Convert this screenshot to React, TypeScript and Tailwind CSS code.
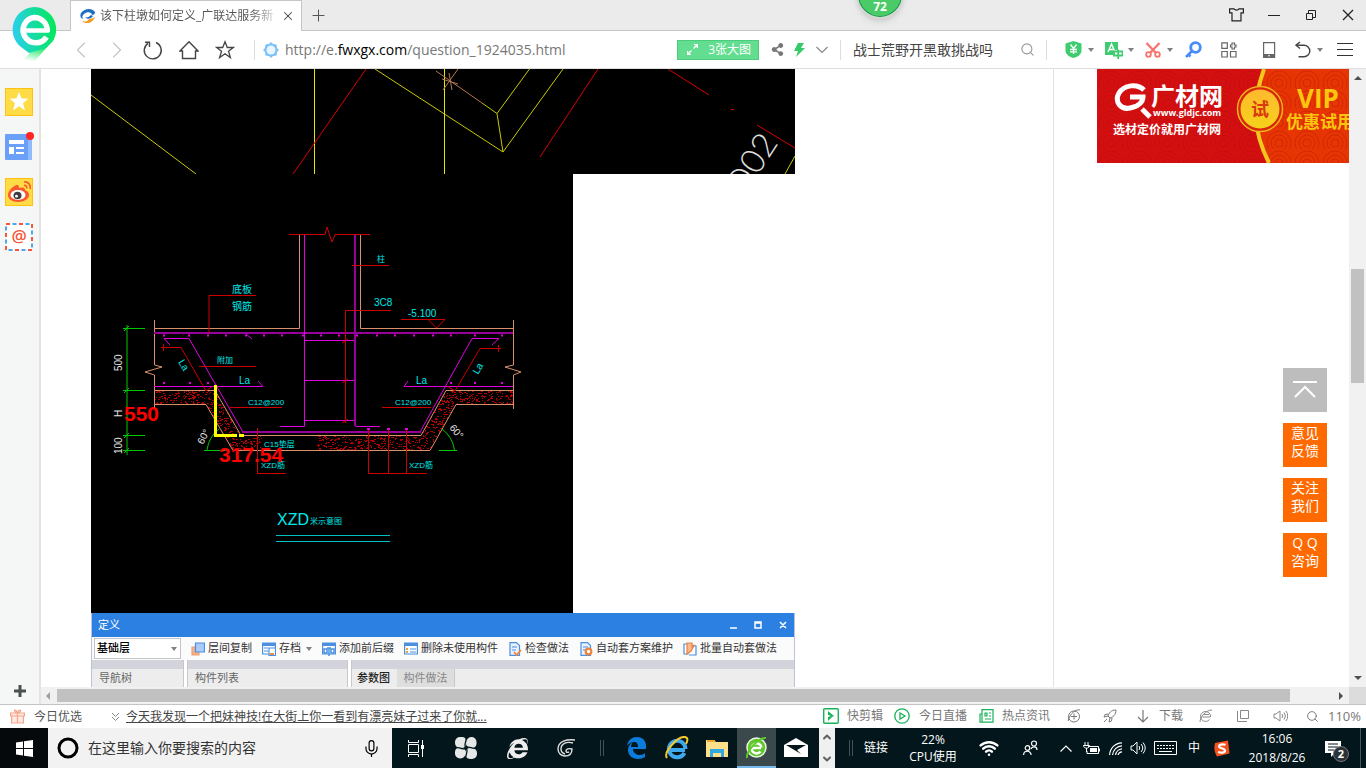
import type { ReactNode } from "react";
import { Mic, Search, ChevronDown, ChevronUp, ChevronLeft, ChevronRight, Plus, X, Star, Wifi } from "lucide-react";
import { FaShareAlt, FaInternetExplorer } from "react-icons/fa";

// ── Small shared pieces ────────────────────────────────────────────
function Caret() {
  return (
    <svg width="6" height="4" viewBox="0 0 6 4" className="shrink-0">
      <path d="M0 0h6L3 4z" fill="#808080" />
    </svg>
  );
}

function IconButton({ label, className, children }: { label: string; className: string; children: ReactNode }) {
  return (
    <button type="button" aria-label={label} className={`flex shrink-0 items-center ${className}`}>
      {children}
    </button>
  );
}

function BrowserLogo() {
  return (
    <svg width="46" height="56" viewBox="0 0 46 56" className="absolute left-[11px] top-[6px] z-20">
      <defs>
        <linearGradient id="logo" x1="0" y1="0.6" x2="1" y2="0.5">
          <stop offset="0" stopColor="#2ccfee" />
          <stop offset="0.55" stopColor="#14dd9b" />
          <stop offset="1" stopColor="#05e85a" />
        </linearGradient>
        <linearGradient id="tail" x1="0.7" y1="0" x2="0.4" y2="1">
          <stop offset="0.3" stopColor="#05e85a" />
          <stop offset="1" stopColor="#05e85a" stopOpacity="0" />
        </linearGradient>
      </defs>
      <path d="M43 33L23 56H10L26 40z" fill="url(#tail)" />
      <path d="M23 1a22.5 22.5 0 0 1 19 34l-7 7-17 5-8-6A22.5 22.5 0 0 1 23 1z" fill="url(#logo)" />
      <path d="M38 24.500H14" stroke="#fff" strokeWidth="4.500" />
      <path d="M36.200 26C37 17 30 11.500 23.500 11.500A12.700 12.700 0 1 0 35.500 31" fill="none" stroke="#fff" strokeWidth="5.500" />
    </svg>
  );
}

// ── Tab strip ──────────────────────────────────────────────────────
function TabStrip() {
  return (
    <header className="relative flex h-[31px] shrink-0 items-stretch border-b border-[#c6c6c6] bg-[#ebebeb] pl-[70px]">
      <div className="-mb-px flex w-[232px] items-center border-x border-t border-[#c6c6c6] bg-white pl-[9px] text-xs text-[#555]">
        <svg width="16" height="16" viewBox="0 0 16 16">
          <path d="M1 5C5 0 12 0 15 4c0 2-1 3-3 3 0-3-5-4-8-1-2 2-2 3-1 5C0 10 0 7 1 5z" fill="#1c6fc4" />
          <path d="M15 9c-2 6-9 8-13 4 4 1 6 0 7-2 2 0 4-1 6-2z" fill="#f59a1f" />
          <path d="M5 9c2 1 4 0 6-2l2 1c-2 3-6 4-8 1z" fill="#1c6fc4" />
        </svg>
        <span className="ml-1 w-[176px] whitespace-nowrap bg-gradient-to-r from-[#555] from-85% to-[#ddd] bg-clip-text text-transparent">
          该下柱墩如何定义_广联达服务新
        </span>
        <IconButton label="关闭标签" className="w-[24px] justify-center text-[#444]"><X size={14} strokeWidth={1.800} /></IconButton>
      </div>
      <IconButton label="新标签" className="w-8 justify-center text-[#555]"><Plus size={19} strokeWidth={1.300} /></IconButton>
      <div className="ml-auto flex text-[#222]">
        <IconButton label="皮肤" className="w-[37px] justify-center">
          <svg width="15" height="14" viewBox="0 0 15 14" fill="none" stroke="#222" strokeWidth="1.200">
            <path d="M.6.800H5c1 1.800 4 1.800 5 0h4.400v4H12v8H3v-8H.6z" />
          </svg>
        </IconButton>
        <IconButton label="最小化" className="w-[37px] justify-center">
          <svg width="12" height="12"><path d="M0 6.500h12" stroke="#222" /></svg>
        </IconButton>
        <IconButton label="还原" className="w-[37px] justify-center">
          <svg width="12" height="12" fill="none" stroke="#222"><path d="M1.500 4.500h6v6h-6zM3.500 4V1.500h7v7H8" /></svg>
        </IconButton>
        <IconButton label="关闭" className="w-[37px] justify-center">
          <svg width="12" height="12"><path d="M1 1l10 10M11 1L1 11" stroke="#222" strokeWidth="1.300" /></svg>
        </IconButton>
      </div>
      <div className="absolute right-[462px] top-[-29px] flex h-12 w-12 items-end justify-center rounded-full border-2 border-[#d5d9d6] bg-[#4bcb68] pb-[2px] text-xs font-bold text-white shadow-md ring-1 ring-inset ring-[#1c8f50]">
        72
      </div>
    </header>
  );
}

// ── Address bar ────────────────────────────────────────────────────
function AddressBar() {
  return (
    <nav className="flex h-[38px] shrink-0 items-center border-b border-[#dedede] bg-white pl-[63px] pr-[13px] text-[#444]">
      <IconButton label="后退" className="w-9 justify-center text-[#c4c4c4]"><ChevronLeft size={28} strokeWidth={1} /></IconButton>
      <IconButton label="前进" className="w-9 justify-center text-[#c4c4c4]"><ChevronRight size={28} strokeWidth={1} /></IconButton>
      <IconButton label="刷新" className="w-9 justify-center">
        <svg width="20" height="20" viewBox="0 0 20 20" fill="none" stroke="#444" strokeWidth="1.400">
          <path d="M13 2.500A8.500 8.500 0 1 1 5 3.300M2 2.200h4.500V7" />
        </svg>
      </IconButton>
      <IconButton label="主页" className="w-9 justify-center">
        <svg width="20" height="20" viewBox="0 0 20 20" fill="none" stroke="#444" strokeWidth="1.400">
          <path d="M1 11l9-9.300L19 11h-2.500v7.500h-13V11z" />
        </svg>
      </IconButton>
      <IconButton label="收藏" className="w-9 justify-center">
        <svg width="20" height="20" viewBox="0 0 20 20" fill="none" stroke="#444" strokeWidth="1.300">
          <path d="M10 1.800l2.300 5.700h6L13.500 11.300l1.900 6.300-5.400-3.800-5.400 3.800 1.900-6.300L1.700 7.500h6z" />
        </svg>
      </IconButton>
      <span className="ml-[11px] h-5 w-px shrink-0 bg-[#ddd]" />
      <svg width="16" height="16" viewBox="0 0 16 16" className="ml-2 shrink-0">
        <path d="M8 0l2 2 3.500.5.5 3.500 2 2-2 2-.5 3.500-3.500.5-2 2-2-2-3.500-.5L2 10 0 8l2-2 .5-3.500L6 2z" fill="#7cc0f8" />
        <circle cx="8" cy="8" r="4.500" fill="#eaf6ff" />
      </svg>
      <div
        role="textbox"
        aria-label="网址"
        contentEditable
        suppressContentEditableWarning
        className="ml-[6px] min-w-0 flex-1 overflow-hidden whitespace-nowrap text-sm text-[#777] outline-none"
      >
        http://e.<span className="text-black">fwxgx.com</span>/question_1924035.html
      </div>
      <button type="button" className="flex h-5 w-[82px] shrink-0 items-center justify-between border border-[#49cd7c] bg-[#63dd90] px-[7px] pl-[9px] text-xs text-white">
        <svg width="11" height="11" viewBox="0 0 11 11" fill="none" stroke="#fff" strokeWidth="1.200">
          <path d="M6.500 4.500l4-4M7 .6h3.400V4M4.500 6.500l-4 4M.6 7v3.400H4" />
        </svg>
        <span>3张大图</span>
      </button>
      <IconButton label="分享" className="ml-3 w-[23px] text-[#777]"><FaShareAlt size={13} /></IconButton>
      <IconButton label="极速模式" className="w-[22px]">
        <svg width="11" height="14" viewBox="0 0 11 14"><path d="M4 0h6L7 5h4L2 14l2-6H0z" fill="#36c969" /></svg>
      </IconButton>
      <IconButton label="更多" className="">
        <svg width="12" height="8" viewBox="0 0 12 8" fill="none" stroke="#888" strokeWidth="1.200"><path d="M.5 1L6 6.500 11.500 1" /></svg>
      </IconButton>
      <span className="ml-3 h-5 w-px shrink-0 bg-[#ddd]" />
      <input aria-label="搜索" defaultValue="战士荒野开黑敢挑战吗" className="ml-3 w-[163px] shrink-0 text-sm text-[#444] outline-none" />
      <IconButton label="搜索" className="ml-1 text-[#999]"><Search size={15} strokeWidth={1.800} /></IconButton>
      <span className="ml-[11px] h-5 w-px shrink-0 bg-[#ddd]" />

      {/* plugin buttons */}
      <IconButton label="网购先赔" className="ml-[18px] w-10 gap-[6px]">
        <svg width="17" height="17" viewBox="0 0 17 17">
          <path d="M8.500 0l8 2.500v7c0 4-4 6.500-8 7.500-4-1-8-3.500-8-7.500v-7z" fill="#3fcc70" />
          <path d="M5.500 3.500l3 4 3-4M8.500 7.500V13M5 8.500h7M5 10.800h7" stroke="#fff" fill="none" strokeWidth="1.300" />
        </svg>
        <Caret />
      </IconButton>
      <IconButton label="翻译" className="w-10 gap-[5px]">
        <svg width="18" height="18" viewBox="0 0 18 18">
          <path d="M0 1h13v8H9v5H0z" fill="#3fcc70" />
          <path d="M3 11L6.500 3 10 11M4 8.500h5" stroke="#fff" fill="none" strokeWidth="1.500" />
          <path d="M9 10.500h8.500v4H9zM13.200 8.500V18" stroke="#3fcc70" fill="none" strokeWidth="1.800" />
        </svg>
        <Caret />
      </IconButton>
      <IconButton label="截图" className="w-10 gap-[6px]">
        <svg width="16" height="16" viewBox="0 0 16 16" stroke="#f8736b" fill="none">
          <path d="M1.500 1L11 11M14.500 1L5 11" strokeWidth="2.300" />
          <circle cx="3.500" cy="12.500" r="2.300" strokeWidth="1.800" />
          <circle cx="12.500" cy="12.500" r="2.300" strokeWidth="1.800" />
        </svg>
        <Caret />
      </IconButton>
      <IconButton label="登录管家" className="w-9">
        <svg width="17" height="17" viewBox="0 0 17 17" stroke="#4a8bfa" fill="none">
          <circle cx="10.500" cy="6.500" r="4.800" strokeWidth="2.800" />
          <path d="M7 10l-6 6M3 13l2.500 2.500" strokeWidth="2.600" />
        </svg>
      </IconButton>
      <IconButton label="扩展" className="w-10">
        <svg width="16" height="16" viewBox="0 0 16 16" stroke="#666" fill="none" strokeWidth="1.200">
          <path d="M.8.800h5.500v5.500H.8zM.8 9.500h5.500V15H.8zM9.500 9.500H15V15H9.500z" />
          <path d="M11 1h2.500v2H15v2h-1.500v2H11V5H9.500V3H11z" />
        </svg>
      </IconButton>
      <IconButton label="手机" className="w-[34px]">
        <svg width="16" height="16" viewBox="0 0 16 16"><path d="M2.600.600h11v14.800h-11z" fill="none" stroke="#666" strokeWidth="1.200" /><path d="M2.500 12h11v3.500h-11z" fill="#666" /><path d="M7 13.800h2" stroke="#fff" /></svg>
      </IconButton>
      <IconButton label="撤销" className="w-[42px] gap-[6px]">
        <svg width="16" height="17" viewBox="0 0 16 17" stroke="#444" fill="none" strokeWidth="1.400">
          <path d="M5 1L1 4.200 5 7.500M1 4.200h8a5.800 5.800 0 0 1 0 11.600H3.500" />
        </svg>
        <Caret />
      </IconButton>
      <IconButton label="菜单" className="w-4">
        <svg width="16" height="14"><path d="M0 .500h16M0 6.500h16M0 12.500h16" stroke="#333" /></svg>
      </IconButton>
    </nav>
  );
}

// ── Left sidebar ───────────────────────────────────────────────────
function Sidebar() {
  return (
    <aside className="flex w-[41px] shrink-0 flex-col border-r-2 border-[#e3e3e3] bg-[#f5f7f7] pb-[6px] pl-[5px] pt-[19px]">
      <div className="flex flex-col gap-[17px]">
        <IconButton label="收藏夹" className="h-7 w-7 justify-center border border-[#ffc20e] bg-[#ffdc45]">
          <svg width="20" height="20" viewBox="0 0 20 20"><path d="M10 0l2.600 6.500H19.500l-5.500 4.700 2 7.300-6-4.200-6 4.200 2-7.300L.5 6.500h6.900z" fill="#fff" /></svg>
        </IconButton>
        <IconButton label="新闻" className="relative h-7 w-7">
          <svg width="27" height="26" viewBox="0 0 27 26">
            <rect width="27" height="26" rx="1" fill="#6aa0f8" />
            <path d="M23 0h4v26h-4z" fill="#8fbaff" />
            <path d="M4 6h15v4H4zM4 13h5v7H4zM11 13h8v2h-8zM11 18h8v2h-8z" fill="#fff" />
          </svg>
          <span className="absolute -right-px -top-px h-2 w-2 rounded-full bg-[#ff2424]" />
        </IconButton>
        <IconButton label="微博" className="h-7 w-7 justify-center border border-[#ffc20e] bg-[#ffdc45]">
          <svg width="24" height="22" viewBox="0 0 24 22">
            <path d="M1 14C1 9 8 3 11 4c1 1 1 2 1 3 3-1 6-1 6 2 3 1 4 3 4 5 0 4-5 7-11 7S1 18 1 14z" fill="#f8582f" />
            <ellipse cx="11" cy="14" rx="7.500" ry="5" fill="#fff" />
            <ellipse cx="10.500" cy="14.500" rx="4" ry="3.800" fill="#3d3d3d" />
            <circle cx="9.500" cy="15.200" r="1.400" fill="#fff" />
            <path d="M17 1c4-1 7 3 6 7M17 4.500c2-.5 3 1 2.700 3" fill="none" stroke="#f8582f" strokeWidth="1.600" />
          </svg>
        </IconButton>
        <IconButton label="邮箱" className="h-7 w-7">
          <svg width="28" height="28" viewBox="0 0 28 28">
            <rect x="1" y="1" width="26" height="26" fill="#fff" stroke="#f4583c" strokeWidth="2" strokeDasharray="4 9" />
            <rect x="1" y="1" width="26" height="26" fill="none" stroke="#4aa8f0" strokeWidth="2" strokeDasharray="4 9" strokeDashoffset="6.500" />
            <text x="14" y="19" textAnchor="middle" fontSize="17" fontWeight="600" fill="#f4583c" fontFamily="Open Sans">@</text>
          </svg>
        </IconButton>
      </div>
      <IconButton label="添加" className="mt-auto w-[30px] justify-center">
        <svg width="14" height="14"><path d="M7 1v12M1 7h12" stroke="#4a4f50" strokeWidth="3" /></svg>
      </IconButton>
    </aside>
  );
}

// ── Article drawings ───────────────────────────────────────────────
function PlanDrawing() {
  return (
    <svg width="704" height="105" viewBox="91 69 704 105" className="block bg-black" fill="none">
      <g stroke="#c8c800">
        <path d="M91 95L196 174M375 69L503 152L563 69M497 113.500L503 152M529.500 69L497 113.500L482 103M795 156L785 174" />
        <path d="M314.500 69V174M444.500 69V174" stroke="#e6e600" />
      </g>
      <path d="M366 69L293 174M598 69L540 157M668 69L709 95M731 109.500H734M757 125L795 148" stroke="#d80000" />
      <path d="M436 71L482 103M443 90L458 69M449 73L452 90M442 79L458 84" stroke="#b47850" />
      <text transform="translate(779 143) rotate(-57)" textAnchor="end" fontSize="34" fontWeight="300" fill="#ddd" fontFamily="Lato">D02</text>
    </svg>
  );
}

// aggregate specks inside the concrete layer, same scatter on every render
function scatter(count: number) {
  let seed = 7;
  const next = () => {
    seed = (seed * 16807) % 2147483647;
    return seed / 2147483647;
  };
  return Array.from({ length: count }, () => ({
    x: 154 + Math.floor(next() * 360),
    y: 390 + Math.floor(next() * 61),
    s: next() > 0.6 ? 2 : 1,
  }));
}

const SPECKS = scatter(3600).filter((d) => !(d.x > 262 && d.x < 317));

const TOP_BARS = [164, 189, 208, 226, 246, 264, 282, 303, 321, 339, 357, 377, 395, 414, 433, 451, 475, 502];

function SectionDrawing() {
  return (
    <svg width="482" height="439" viewBox="91 174 482 439" className="block bg-black" fill="none" fontFamily="Liberation Sans, Noto Sans CJK SC, sans-serif">
      <clipPath id="concrete">
        <path d="M154 390H215L241 435H421L446 390H513V404H456L430 451H233L206 404H154z" />
      </clipPath>
      <g clipPath="url(#concrete)" fill="#b00000">
        {SPECKS.map((d, i) => (
          <rect key={i} x={d.x} y={d.y} width={d.s} height="1" />
        ))}
      </g>

      {/* concrete outline and broken edges */}
      <g stroke="#d8906c">
        <path d="M154 390.500H215L241 435.500H421L446 390.500H513M154 404.500H206L233 450.500H430L456 404.500H513" />
        <path d="M299.500 234V328.500H154M360.500 234V328.500H513" />
        <path d="M154.500 320V365L162 367L145 372L154.500 375V409M513.500 320V365L505 367L521 372L513.500 375V409" />
      </g>

      {/* reinforcement */}
      <g stroke="#e000e0">
        <path d="M154 333H513" stroke="#98009c" strokeWidth="2" />
        <path d="M304.500 234V426.500H280M355.500 426.500H380M304 340.500H355M304 380.500H355M304 420.500H355" />
        <path d="M355 234V426" stroke="#98009c" strokeWidth="2" />
        <path d="M170 345L164 338.500H189L243 432M420 432L472 338.500H499L492 345" />
        <path d="M242 432H421" stroke="#98009c" strokeWidth="2" />
        <path d="M154 386.500H263L258 381M513 386.500H404L408 381M246 334L252 339" />
        {TOP_BARS.map((x) => (
          <path key={x} d={`M${x - 1} 335.500h2`} strokeWidth="2" />
        ))}
        <path d="M163 383h2M189 383h2M207 383h2M450 383h2M474 383h2M501 383h2M367 429h3M387 429h3M405 429h3" strokeWidth="2" />
      </g>

      {/* leaders */}
      <g stroke="#cc0000">
        <path d="M289 234.500H325L327 227L332 242L335 234.500H370" />
        <path d="M209 333V295.500H256M199 366.500H256M230 407.500H282M382 407.500H431M352 265.500H389" />
        <path d="M391 310.500H345.500V423M342 343l6-4M342 383l6-4M342 423l6-4" />
        <path d="M401 319.500H445L436.500 328L428 319.500" />
        <path d="M161 347.500H181L206 391L213 386M163.500 344V351M501 348.500H480L455 391L447 386M498.500 345V352" />
        <path d="M257.500 428V473.500H286M368.500 430V473.500H427M388.500 430V473.500M406.500 430V473.500" />
      </g>

      {/* dimensions */}
      <g stroke="#00c800">
        <path d="M127 325V455M123 328.500H145M123 390.500H145M123 435.500H145M123 450.500H145" />
        <path d="M204 450.500H228M207 450A32 32 0 0 1 219 429M439 450.500H457M454.500 450A32 32 0 0 0 442 429" />
        <path d="M124 331l5-5M124 393l5-5M124 438l5-5M124 453l5-5" />
      </g>
      <path d="M215.500 385V435.500H232" stroke="#ffff00" strokeWidth="3" />
      <path d="M232 435.500H244" stroke="#ffff00" strokeWidth="3" strokeDasharray="5 2" />

      {/* labels */}
      <g fill="#00e8e8" fontSize="10">
        <text x="232" y="293">底板</text>
        <text x="232" y="310">钢筋</text>
        <text x="217" y="363" fontSize="8">附加</text>
        <text x="377" y="262" fontSize="8">柱</text>
        <text x="374" y="306">3C8</text>
        <text x="408" y="317">-5.100</text>
        <text x="239" y="384">La</text>
        <text x="416" y="384">La</text>
        <text transform="translate(178 362) rotate(60)">La</text>
        <text transform="translate(478 375) rotate(-60)">La</text>
        <text x="248" y="405" fontSize="8">C12@200</text>
        <text x="395" y="405" fontSize="8">C12@200</text>
        <text x="264" y="447" fontSize="8">C15垫层</text>
        <text x="261" y="468" fontSize="8">XZD筋</text>
        <text x="409" y="468" fontSize="8">XZD筋</text>
        <text x="277" y="525" fontSize="16">XZD</text>
        <text x="310" y="524" fontSize="8">米示意图</text>
      </g>
      <g fill="#e0e0e0" fontSize="10">
        <text transform="translate(122 371) rotate(-90)">500</text>
        <text transform="translate(122 417) rotate(-90)">H</text>
        <text transform="translate(122 454) rotate(-90)">100</text>
        <text transform="translate(203 445) rotate(-62)">60°</text>
        <text transform="translate(449 428) rotate(50)">60°</text>
      </g>
      <path d="M276 535.500H390M276 541.500H390" stroke="#00c0c0" />
      <g fill="#ff0000" fontSize="21" fontWeight="700">
        <text x="124" y="421">550</text>
        <text x="219" y="462">317.54</text>
      </g>
    </svg>
  );
}

// ── Component definition window ────────────────────────────────────
const TOOLS = [
  { label: "层间复制", icon: "copy", caret: false },
  { label: "存档", icon: "save", caret: true },
  { label: "添加前后缀", icon: "prefix", caret: false },
  { label: "删除未使用构件", icon: "list", caret: false },
  { label: "检查做法", icon: "check", caret: false },
  { label: "自动套方案维护", icon: "gear", caret: false },
  { label: "批量自动套做法", icon: "batch", caret: false },
];

function ToolIcon({ name }: { name: string }) {
  return (
    <svg width="14" height="14" viewBox="0 0 14 14" fill="none" stroke="#4a8fe0" strokeWidth="1.200" className="shrink-0">
      {name === "copy" && <><path d="M1 5h7v8H1z" fill="#f6b083" stroke="#f0a070" /><path d="M4.500 1h9v9h-9z" fill="#a9ccfa" /></>}
      {(name === "save" || name === "prefix" || name === "list") && <><path d="M.6 1h12.800v11H.6z" fill="#fff" /><path d="M0 2.500h14" strokeWidth="3" /></>}
      {name === "save" && <><path d="M2 6h4M2 9h4" /><path d="M7 6h6.500v7.500H7z" fill="#fff" /><path d="M8 11h4v2H8z" fill="#f0863c" stroke="none" /></>}
      {name === "prefix" && <path d="M2 7h3v4H2zM9 7h3v4H9zM7 6v8M5 6h4" strokeWidth="1.500" />}
      {name === "list" && <><path d="M6 7h6M6 10h6" /><path d="M2 7h2M2 10h2" stroke="#f0a03c" strokeWidth="1.800" /></>}
      {(name === "check" || name === "gear") && <path d="M2 .6h6.500l3 3v9.800H2zM4 5h5M4 8h4" fill="#e7f1ff" />}
      {name === "check" && <path d="M6 10l2.500 3L13 8" stroke="#f0863c" strokeWidth="1.800" />}
      {name === "gear" && <circle cx="9.500" cy="9.500" r="2.800" fill="#fff" stroke="#f0803c" strokeWidth="2.200" />}
      {name === "batch" && <><path d="M1 2h4v10H1zM9 3l4 1v9H6" fill="#fff" /><path d="M4 1h5v4l2-1-3 5-4 3z" fill="#fbb98c" stroke="#f0803c" /></>}
    </svg>
  );
}

function DefinitionWindow() {
  return (
    <div className="w-[704px] border-x border-[#b9c4dc] bg-[#d2d3db] text-[11px] text-[#333]">
      <div className="flex h-6 items-center bg-[#2b80e2] pl-[6px] pr-[5px] text-[11px] text-white">
        <span>定义</span>
        <svg width="60" height="10" viewBox="0 0 60 10" fill="none" stroke="#fff" className="ml-auto" strokeWidth="1.500">
          <path d="M1 8h7M26 2h6v6h-6zM26 3h6M51 2l6 6M57 2l-6 6" />
        </svg>
      </div>
      <div className="flex h-[23px] items-center bg-[#fbfbfc] pl-[2px]">
        <div className="relative mr-[10px] h-[21px] w-[87px] shrink-0 border border-[#c4c4c8] bg-white">
          <select aria-label="楼层" defaultValue="基础层" className="h-full w-full appearance-none bg-transparent pl-[2px] text-[11px] font-medium text-black">
            <option>基础层</option>
          </select>
          <span className="pointer-events-none absolute right-[3px] top-2 flex"><Caret /></span>
        </div>
        <div className="flex gap-[10px]">
          {TOOLS.map((tool) => (
            <button key={tool.label} type="button" className="flex items-center gap-[3px] whitespace-nowrap">
              <ToolIcon name={tool.icon} />
              {tool.label}
              {tool.caret && <span className="ml-[2px] flex"><Caret /></span>}
            </button>
          ))}
        </div>
      </div>
      <div className="flex h-[27px] pt-[9px] text-[#666]">
        <div className="w-[91px] bg-[#ededed] pl-[7px] pt-px">导航树</div>
        <div className="-mt-[9px] w-[5px] border-x border-[#c8c8cc] bg-white" />
        <div className="w-[159px] bg-[#ededed] pl-[7px] pt-px">构件列表</div>
        <div className="-mt-[9px] w-[5px] border-x border-[#c8c8cc] bg-white" />
        <div className="flex flex-1 bg-[#ededed]">
          <button type="button" className="w-[45px] pl-[5px] text-left font-medium text-[#222]">参数图</button>
          <button type="button" className="w-[58px] border-r border-[#c8c8cc] bg-[#dedede] text-[#888]">构件做法</button>
        </div>
      </div>
    </div>
  );
}

// ── Right column banner ────────────────────────────────────────────
function Banner() {
  return (
    <a href="#banner" className="block w-[252px] overflow-hidden">
      <svg width="252" height="94" viewBox="0 0 252 94" fontFamily="Noto Sans CJK SC, sans-serif" fontWeight="700">
        <defs>
          <pattern id="waves" width="28" height="20" patternUnits="userSpaceOnUse">
            <g fill="none" stroke="#a80505" strokeOpacity="0.3">
              <circle cx="14" cy="14" r="12" /><circle cx="14" cy="14" r="8" /><circle cx="14" cy="14" r="4" />
            </g>
          </pattern>
          <linearGradient id="coin" x1="0" y1="0" x2="0" y2="1">
            <stop offset="0" stopColor="#ffb92e" /><stop offset="1" stopColor="#f5d21a" />
          </linearGradient>
        </defs>
        <path d="M0 0h252v94H0z" fill="#d40f10" />
        <path d="M168 0C156 34 156 60 172 94H252V0z" fill="#e63403" />
        <path d="M0 0h252v94H0z" fill="url(#waves)" />
        <path d="M167 0C155 34 155 60 172 94" fill="none" stroke="#f2c81c" strokeWidth="4" />
        <circle cx="163" cy="40" r="22.500" fill="#d9260a" stroke="#f0b31c" strokeWidth="1.500" />
        <circle cx="163" cy="40" r="19.500" fill="url(#coin)" />
        <text x="163" y="47" fontSize="18" textAnchor="middle" fill="#d83a0c">试</text>
        <path d="M47 21C40 14 27 16 22 24c-5 9 2 17 11 15 8-1 13-6 13-11H33" fill="none" stroke="#fff" strokeWidth="5" />
        <path d="M45 40l8 8" stroke="#fff" strokeWidth="5" />
        <g fill="#fff">
          <text x="54" y="36" fontSize="24">广材网</text>
          <text x="56" y="47" fontSize="9" fontFamily="Open Sans">www.gldjc.com</text>
          <text x="16" y="65" fontSize="12">选材定价就用广材网</text>
        </g>
        <g fill="#fbc70e">
          <text x="200" y="39" fontSize="26" fontFamily="Open Sans">VIP</text>
          <text x="189" y="59" fontSize="17">优惠试用</text>
        </g>
      </svg>
    </a>
  );
}

function FloatingMenu() {
  return (
    <div className="absolute right-[22px] top-[299px] flex w-11 flex-col gap-[11px] text-sm leading-[18px] text-white">
      <IconButton label="回到顶部" className="h-11 justify-center bg-[#bdbdbd]">
        <svg width="24" height="18" fill="none" stroke="#fff" strokeWidth="2"><path d="M0 1h24M2 16L12 6l10 10" /></svg>
      </IconButton>
      <button type="button" className="h-11 bg-[#ff6a00] pb-[6px]">意见<br />反馈</button>
      <button type="button" className="h-11 bg-[#ff6a00] pb-[6px]">关注<br />我们</button>
      <button type="button" className="h-11 bg-[#ff6a00] pb-[6px]">Q Q<br />咨询</button>
    </div>
  );
}

// ── Status bar ─────────────────────────────────────────────────────
function StatusBar() {
  return (
    <div className="flex h-6 shrink-0 items-center border-t border-[#c4c4c4] bg-white pl-[10px] pr-[5px] text-xs text-[#777]">
      <svg width="15" height="15" viewBox="0 0 15 15" fill="none" stroke="#f5a58a" strokeWidth="1.200">
        <path d="M.6 4h13.800v3H.6zM1.600 7h11.800v7H1.600zM7.500 4v10M7.500 4C5 4 3.500 1 5 1s2.500 3 2.500 3S8.500 1 10 1 10 4 7.500 4" fill="#fdeae3" />
      </svg>
      <a href="#today" className="ml-[9px] text-[#555]">今日优选</a>
      <svg width="9" height="10" viewBox="0 0 9 10" fill="none" stroke="#888" className="ml-[29px]"><path d="M1 1l3.500 3.500L8 1M1 5l3.500 3.500L8 5" /></svg>
      <a href="#news" className="ml-[6px] whitespace-nowrap text-[#444] underline">今天我发现一个把妹神技!在大街上你一看到有漂亮妹子过来了你就...</a>

      <div className="ml-auto flex items-center whitespace-nowrap">
        <button type="button" className="flex w-[71px] items-center gap-2">
          <svg width="16" height="16" viewBox="0 0 16 16"><rect x=".7" y=".7" width="14.600" height="14.600" rx="1" fill="none" stroke="#16b35a" strokeWidth="1.400" /><path d="M5 3l6 5-2 1-4 4V9l3-1-3-1z" fill="#16b35a" /></svg>
          快剪辑
        </button>
        <button type="button" className="flex w-[85px] items-center gap-[9px]">
          <svg width="16" height="16" viewBox="0 0 16 16" fill="none" stroke="#16b35a" strokeWidth="1.300"><circle cx="8" cy="8" r="7.200" /><path d="M6 5l5 3-5 3z" /></svg>
          今日直播
        </button>
        <button type="button" className="flex w-[88px] items-center gap-2">
          <svg width="15" height="14" viewBox="0 0 15 14" fill="none" stroke="#16b35a" strokeWidth="1.200"><path d="M3 .7h11v12.500H1V5h2zM3 5v8M6 4h2v3H6zM10 4h2M10 7h2M6 10h6" /></svg>
          热点资讯
        </button>
        <IconButton label="加速" className="w-9">
          <svg width="14" height="14" viewBox="0 0 14 14" fill="none" stroke="#777"><circle cx="7" cy="7.500" r="5.500" /><path d="M1 12C3 4 9 0 13 1M7 4.500v6M4 7.500h6" /></svg>
        </IconButton>
        <IconButton label="火箭" className="w-[34px]">
          <svg width="14" height="14" viewBox="0 0 14 14" fill="none" stroke="#777"><path d="M13 1c-5 0-7 3-8 6l2 2c3-1 6-3 6-8zM5 5L2 5.500 1 8l4-1M9 9l-.5 3L6 13l1-4M4 10l-3 3" /></svg>
        </IconButton>
        <button type="button" className="flex w-[62px] items-center gap-[10px]">
          <svg width="12" height="13" viewBox="0 0 12 13" fill="none" stroke="#777" strokeWidth="1.200"><path d="M6 0v12M1 7l5 5 5-5" /></svg>
          下载
        </button>
        <IconButton label="内核" className="w-[38px]">
          <svg width="14" height="14" viewBox="0 0 14 14" fill="none" stroke="#888"><path d="M11.500 8H3.500M11.500 8A5 5 0 1 0 10.500 10.500M1 13C1 8 7 1 13 1M4 5.500h6" /></svg>
        </IconButton>
        <IconButton label="窗口" className="w-[36px]">
          <svg width="12" height="12" fill="none" stroke="#888"><path d="M3.500.5h8v8h-8zM.5 1v10.500H10" /></svg>
        </IconButton>
        <IconButton label="声音" className="w-[33px]">
          <svg width="15" height="12" viewBox="0 0 15 12" fill="none" stroke="#888"><path d="M1 4h2l4-3v10L3 8H1zM9 4q1.500 2 0 4M11 2.500q3 3.500 0 7M13 1q3.500 5 0 10" /></svg>
        </IconButton>
        <IconButton label="缩放" className="w-[22px]"><Search size={13} strokeWidth={1.800} /></IconButton>
        <span className="text-[13px]">110%</span>
      </div>
    </div>
  );
}

// ── Windows taskbar ────────────────────────────────────────────────
function Taskbar() {
  return (
    <footer className="flex h-10 shrink-0 items-stretch bg-[#03161b] text-xs text-white">
      <IconButton label="开始" className="w-12 justify-center bg-[#05090b]">
        <svg width="17" height="17" viewBox="0 0 17 17" fill="#fff"><path d="M0 2.500l7-1v6.500H0zM8 1.300L17 0v8H8zM0 9h7v6.500l-7-1zM8 9h9v8l-9-1.300z" /></svg>
      </IconButton>
      <div className="flex w-[344px] shrink-0 items-center bg-[#f2f2f2] pl-[9px] pr-[11px]">
        <svg width="22" height="22"><circle cx="11" cy="11" r="9" fill="none" stroke="#000" strokeWidth="3" /></svg>
        <input aria-label="搜索" placeholder="在这里输入你要搜索的内容" className="ml-[9px] min-w-0 flex-1 bg-transparent text-sm outline-none placeholder:text-[#333]" />
        <Mic size={19} strokeWidth={1.500} className="text-black" />
      </div>
      <IconButton label="任务视图" className="w-12 justify-center">
        <svg width="18" height="17" fill="none" stroke="#fff"><path d="M1.500 4.500h10v8h-10zM1.500 0v2.500h10V0M1.500 17v-2.500h10V17M15.500 0v17" /><path d="M14 5h3v4h-3z" fill="#fff" stroke="none" /></svg>
      </IconButton>
      <IconButton label="风扇" className="w-[52px] justify-center">
        <svg width="22" height="22" viewBox="0 0 22 22" fill="#e6e8e8">
          <rect width="12" height="11" rx="5" /><rect x="11.500" width="10" height="11.500" rx="5" /><rect y="10" width="10.500" height="11.500" rx="5" /><rect x="10" y="11" width="12" height="11" rx="5" />
          <path d="M11 11C8 8 12 5 11 0M11 11C8 14 5 9 0 11M11 11C14 14 10 17 11 22M11 11C14 8 17 13 22 11" fill="none" stroke="#03161b" strokeWidth="1.300" />
        </svg>
      </IconButton>
      <IconButton label="浏览器" className="w-[50px] justify-center text-[#eee]"><FaInternetExplorer size={21} /></IconButton>
      <IconButton label="应用" className="w-12 justify-center">
        <svg width="18" height="18" viewBox="0 0 18 18" fill="none" stroke="#e0e0e0" strokeWidth="1.400"><path d="M18 1C10 0 1 2 1 10c0 5 4 7 7 7 5 0 7-3 7-7-3-1-6 0-6 2 0 1 1 2 3 1M16 4C9 2 4 5 4 10c0 2 1 4 4 5" /></svg>
      </IconButton>
      <span className="my-auto ml-[10px] mr-[13px] h-4 w-1 shrink-0 border-x border-[#455156]" />
      <IconButton label="Edge" className="w-10 justify-center">
        <svg width="22" height="24" viewBox="0 0 22 24"><path d="M1 10C2 4 6 1 11 1c6 0 9 4 9 9v3H7c0 4 4 6 7 6 2 0 4-1 5-2v4c-2 1-4 2-7 2-6 0-10-4-10-9 0-4 2-6 5-8-1 1-2 3-2 5h7c0-3-1-5-4-5-3 0-6 2-7 4z" fill="#0b7bdc" /></svg>
      </IconButton>
      <IconButton label="Internet Explorer" className="w-10 justify-center">
        <svg width="24" height="24" viewBox="0 0 24 24" fill="none">
          <path d="M20 14H6M19.500 17A8.300 8.300 0 1 1 20.500 13" stroke="#3fa9ee" strokeWidth="4" />
          <path d="M2 22C-2 17 12 0 20 1c4 1 2 5 1 7" stroke="#f4c82c" strokeWidth="2" />
        </svg>
      </IconButton>
      <IconButton label="文件资源管理器" className="w-10 justify-center">
        <svg width="22" height="19" viewBox="0 0 22 19"><path d="M0 1h8l2 2h12v15H0z" fill="#ffe08a" /><path d="M1 1h8v2H1z" fill="#e9a92b" /><path d="M4 10h14v8h-3v-4H7v4H4z" fill="#31a8e0" /></svg>
      </IconButton>
      <IconButton label="360浏览器" className="w-[39px] justify-center border-b-2 border-[#76b9ed] bg-[#3b484c]">
        <svg width="23" height="23" viewBox="0 0 23 23" fill="none">
          <circle cx="11.500" cy="11.500" r="9.500" fill="#62c52c" stroke="#e9f5e2" strokeWidth="1.500" />
          <path d="M16 12H7M16.500 11.500a5 5 0 1 0-1 4" stroke="#fff" strokeWidth="2.500" />
          <path d="M2 22C1 15 14 1 21 2" stroke="#58cc24" strokeWidth="2" />
        </svg>
      </IconButton>
      <IconButton label="邮件" className="w-10 justify-center">
        <svg width="24" height="20" viewBox="0 0 24 20"><path d="M0 7L12 0l12 7v12H0z" fill="#fff" /><path d="M2 7h20l-9 5 4 4z" fill="#03161b" /></svg>
      </IconButton>
      <div className="ml-[3px] flex w-4 shrink-0 flex-col items-center justify-between bg-[#f0f0f0] py-[3px] text-[#606060]">
        <ChevronUp size={12} strokeWidth={4} />
        <ChevronDown size={12} strokeWidth={4} />
      </div>

      {/* tray */}
      <div className="ml-auto flex items-center">
        <span className="h-4 w-1 border-x border-[#455156]" />
        <span className="ml-[11px]">链接</span>
        <div className="ml-[21px] w-12 text-center leading-[17px]">22%<br />CPU使用</div>
        <IconButton label="无线网络" className="ml-[22px]"><Wifi size={20} strokeWidth={3} /></IconButton>
        <IconButton label="人脉" className="ml-[24px]">
          <svg width="15" height="16" viewBox="0 0 15 16" fill="none" stroke="#fff" strokeWidth="1.200"><circle cx="4.500" cy="8" r="2.300" /><path d="M.6 15c0-5 7.500-5 7.500 0M8 9c1-3 6-3 6 1" /><circle cx="11" cy="3.500" r="2.500" /></svg>
        </IconButton>
        <IconButton label="显示隐藏的图标" className="ml-[22px]">
          <svg width="12" height="7" viewBox="0 0 12 7" fill="none" stroke="#fff" strokeWidth="1.200"><path d="M.5 6.500L6 1l5.500 5.500" /></svg>
        </IconButton>
        <IconButton label="电池" className="ml-[11px]">
          <svg width="17" height="13" viewBox="0 0 17 13" fill="none" stroke="#fff"><path d="M5 4.500h10.500v7H4V9M16.500 6.500v3M2 0v3M5 0v3M.5 3.500h6C6.500 7 .5 7 .5 3.500zM3.500 6v4" /><path d="M7 6h7v4H7z" fill="#fff" stroke="none" /></svg>
        </IconButton>
        <IconButton label="WLAN" className="ml-[9px]">
          <svg width="13" height="13" viewBox="0 0 13 13" fill="none" stroke="#fff" strokeWidth="1.200"><path d="M.6 13C1 6 6 1 13 .8M3.500 13C4 8 8 4 13 3.800M6.500 13c.5-3 3-6 6.500-6.200M9 13c.5-2 2-3 4-3.200" /></svg>
        </IconButton>
        <IconButton label="音量" className="ml-2">
          <svg width="16" height="14" viewBox="0 0 16 14" fill="none" stroke="#fff"><path d="M1 5h2l4-4v12L3 9H1zM9 5q1.500 2 0 4M11 3q3.500 4 0 8M13 1.500q4.500 5.500 0 11" /></svg>
        </IconButton>
        <IconButton label="键盘" className="ml-2">
          <svg width="23" height="14" viewBox="0 0 23 14" fill="none" stroke="#fff"><path d="M.5.500h22v13H.5z" /><path d="M3 4.500h17M3 7.500h17" strokeDasharray="2 1" /><path d="M5 10.500h13" /></svg>
        </IconButton>
        <span className="ml-[11px]">中</span>
        <svg width="16" height="17" viewBox="0 0 16 17" className="ml-[14px]"><path d="M1 3l13-2.500 1.500 13L3 16.500C0 12 0 7 1 3z" fill="#f4511e" /><path d="M11.500 4.800C8 4 5 4.500 5 6.500s6 1.500 6 4-4 2.500-7 1.500" stroke="#fff" strokeWidth="2.200" fill="none" /></svg>
        <div className="ml-[17px] w-[60px] text-center leading-[19px]">16:06<br />2018/8/26</div>
        <button type="button" aria-label="通知" className="relative ml-[18px] flex h-10 w-[35px] items-center">
          <svg width="17" height="17" viewBox="0 0 17 17"><path d="M0 1h16v12h-6l-4 4v-4H0z" fill="#fff" /><path d="M3 4h10M3 7h10M3 10h6" stroke="#03161b" /></svg>
          <span className="absolute left-2 top-[18px] flex h-4 w-4 items-center justify-center rounded-full border border-[#777] bg-[#2b3235] text-[11px] font-bold">2</span>
        </button>
        <span className="h-10 w-[6px] border-l border-[#4b5558]" />
      </div>
    </footer>
  );
}

// ── Page ───────────────────────────────────────────────────────────
export default function App() {
  return (
    <div className="relative flex h-screen flex-col overflow-hidden bg-white font-['Open_Sans','Noto_Sans_CJK_SC',sans-serif]">
      <TabStrip />
      <AddressBar />
      <BrowserLogo />
      <div className="flex min-h-0 flex-1">
        <Sidebar />
        <div className="flex min-w-0 flex-1 flex-col">
          <div className="flex min-h-0 flex-1">
            <div className="relative flex min-w-0 flex-1 overflow-hidden">
              <main className="min-w-0 flex-1 overflow-hidden pl-[50px]">
                <PlanDrawing />
                <SectionDrawing />
                <DefinitionWindow />
              </main>
              <aside className="w-[296px] shrink-0 border-l border-[#e3e3e3] pl-[43px]">
                <Banner />
              </aside>
              <FloatingMenu />
            </div>
            {/* vertical scrollbar */}
            <div className="flex w-[17px] shrink-0 flex-col items-center bg-[#f1f1f1] py-[7px]">
              <svg width="8" height="4"><path d="M0 4L4 0l4 4z" fill="#505050" /></svg>
              <div className="mt-[189px] h-[114px] w-[13px] bg-[#c1c1c1]" />
              <svg width="8" height="4" className="mt-auto"><path d="M0 0h8L4 4z" fill="#505050" /></svg>
            </div>
          </div>
          {/* horizontal scrollbar */}
          <div className="flex h-[17px] shrink-0 items-center bg-[#f1f1f1]">
            <svg width="4" height="8" className="ml-[5px]"><path d="M4 0v8L0 4z" fill="#a0a0a0" /></svg>
            <div className="ml-[7px] mr-[49px] h-[13px] flex-1 bg-[#c1c1c1]" />
            <svg width="4" height="8" className="mr-[6px]"><path d="M0 0v8l4-4z" fill="#505050" /></svg>
            <div className="h-full w-[17px] bg-[#dcdcdc]" />
          </div>
        </div>
      </div>
      <StatusBar />
      <Taskbar />
    </div>
  );
}
